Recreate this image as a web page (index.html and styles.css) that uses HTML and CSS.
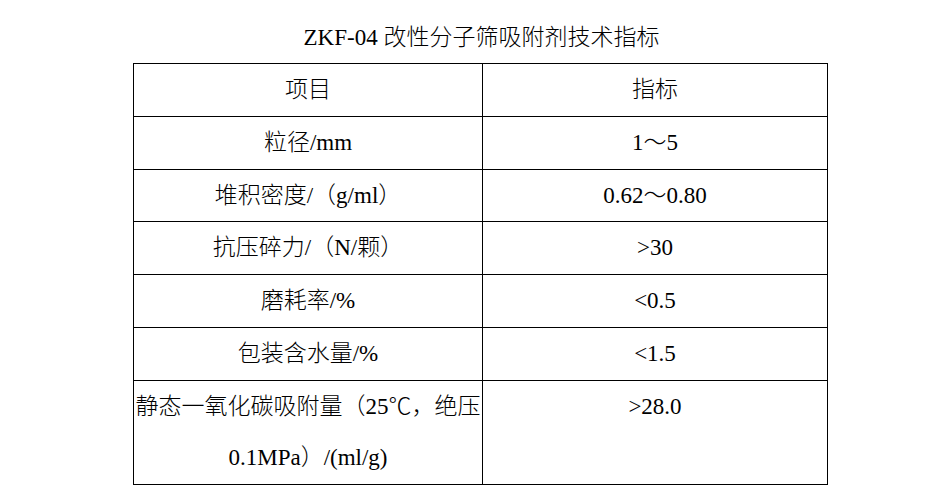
FILE: index.html
```html
<!DOCTYPE html>
<html lang="zh-CN">
<head>
<meta charset="utf-8">
<title>ZKF-04 改性分子筛吸附剂技术指标</title>
<link rel="stylesheet" href="styles.css">
</head>
<body>
<div class="wrap">
  <h1 class="title">ZKF-04 改性分子筛吸附剂技术指标</h1>
  <table class="spec">
    <colgroup><col class="c1"><col class="c2"></colgroup>
    <tbody>
      <tr><td>项目</td><td>指标</td></tr>
      <tr><td>粒径/mm</td><td>1～5</td></tr>
      <tr><td>堆积密度/（g/ml）</td><td>0.62～0.80</td></tr>
      <tr><td>抗压碎力/（N/颗）</td><td>&gt;30</td></tr>
      <tr><td>磨耗率/%</td><td>&lt;0.5</td></tr>
      <tr><td>包装含水量/%</td><td>&lt;1.5</td></tr>
      <tr><td>静态一氧化碳吸附量（25℃，绝压0.1MPa）/(ml/g)</td><td>&gt;28.0</td></tr>
    </tbody>
  </table>
</div>
</body>
</html>
```

FILE: styles.css
```css
html, body {
  margin: 0;
  padding: 0;
  background: #fff;
}
body {
  font-family: "Liberation Serif", "Noto Sans CJK SC", serif;
  color: #000;
  font-size: 23px;
  font-weight: 300;
}
.wrap {
  width: 694px;
  margin-left: 133px;
  padding-top: 23px;
}
.title {
  margin: 0 0 10px 0;
  font-size: 23px;
  font-weight: 300;
  line-height: 30px;
  text-align: center;
  padding-left: 3px;
}
.spec {
  width: 694px;
  border-collapse: collapse;
  table-layout: fixed;
}
.spec .c1 { width: 349px; }
.spec .c2 { width: 345px; }
.spec td {
  border: 1px solid #000;
  padding: 0;
  text-align: center;
  vertical-align: top;
  line-height: 51.75px;
}
```
